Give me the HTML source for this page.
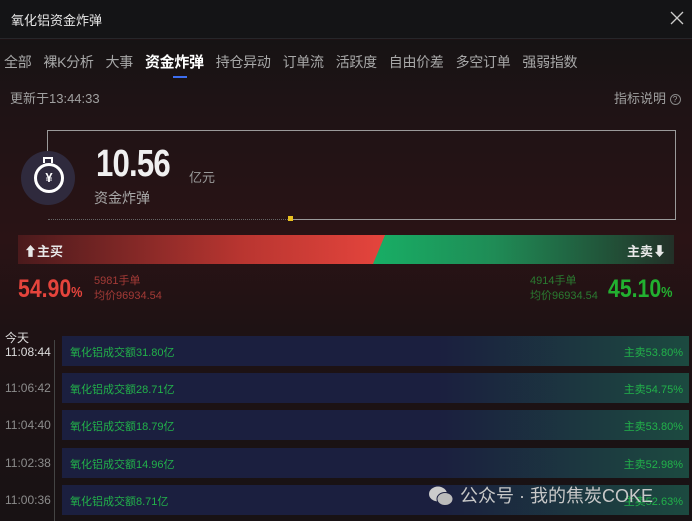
<!DOCTYPE html>
<html><head><meta charset="utf-8"><style>
*{margin:0;padding:0;box-sizing:border-box}
body{width:692px;height:521px;overflow:hidden;background:#1c1214;font-family:"Liberation Sans","Noto Sans CJK SC",sans-serif;position:relative;color:#ccc}
.hdr{position:absolute;left:0;top:0;width:692px;height:39px;background:#141416;border-bottom:1px solid #26262a}
.hdr .t{position:absolute;left:11px;top:10px;font-size:13px;color:#e8e8e8}
.main{position:absolute;left:0;top:40px;width:692px;height:481px;background:linear-gradient(180deg,#161314 0,#1e1315 60px,#2a1315 200px,#1e1214 290px,#181214 481px)}
.tabs{position:absolute;top:51px;left:4px;font-size:14px;color:#a8a8a8;white-space:nowrap;letter-spacing:-0.3px}
.tabs span{margin-right:12px}
.tabs .on{color:#fff;font-weight:bold;font-size:15px;position:relative}
.tabs .on:after{content:"";position:absolute;left:28px;bottom:-7px;width:14px;height:2px;background:#3d6ef0}
.abs{position:absolute;white-space:nowrap}
.row{position:absolute;left:62px;width:627px;height:30px;background:linear-gradient(90deg,#1b1f3f 0,#1b1f3f 60%,#1c4a40 100%);font-size:11px;color:#22b24a}
.row .l{position:absolute;left:8px;top:8px}
.row .r{position:absolute;right:6px;top:8px}
.tm{position:absolute;left:5px;font-size:12px;color:#8c8c8c}
</style></head><body>
<div class="hdr"><div class="t">氧化铝资金炸弹</div>
<svg class="abs" style="left:670px;top:11px" width="14" height="14"><path d="M1 1L13 13M13 1L1 13" stroke="#ccc" stroke-width="1.3"/></svg></div>
<div class="main"></div>
<div class="tabs"><span>全部</span><span>裸K分析</span><span>大事</span><span class="on">资金炸弹</span><span>持仓异动</span><span>订单流</span><span>活跃度</span><span>自由价差</span><span>多空订单</span><span>强弱指数</span></div>
<div class="abs" style="left:10px;top:88px;font-size:13px;color:#a0a0a0">更新于13:44:33</div>
<div class="abs" style="left:614px;top:88px;font-size:13px;color:#a0a0a0">指标说明 <span style="display:inline-block;width:11px;height:11px;border:1px solid #888;border-radius:50%;font-size:8px;text-align:center;line-height:9px;vertical-align:1px">?</span></div>
<div class="abs" style="left:48px;top:130px;width:628px;height:90px;border:1px solid #9a9a9a;border-left:none;border-bottom:none"></div>
<div class="abs" style="left:290px;top:219px;width:386px;height:1px;background:#9a9a9a"></div>
<div class="abs" style="left:48px;top:219px;width:242px;height:0;border-top:1px dotted #666"></div>
<div class="abs" style="left:47px;top:130px;width:1px;height:28px;background:#9a9a9a"></div>
<div class="abs" style="left:288px;top:216px;width:5px;height:5px;background:#e8c020"></div>
<div class="abs" style="left:21px;top:151px;width:54px;height:54px;border-radius:50%;background:#2f2a3d"></div>
<div class="abs" style="left:34px;top:163px;width:30px;height:30px;border-radius:50%;border:3px solid #fff;color:#fff;font-size:13px;text-align:center;line-height:24px;font-weight:bold">¥</div>
<div class="abs" style="left:43px;top:157px;width:10px;height:6px;border:2px solid #fff;border-bottom:none"></div>
<div class="abs" style="left:96px;top:143px;font-size:38px;font-weight:bold;color:#f0f0f0;letter-spacing:-1px;transform:scaleX(0.82);transform-origin:left">10.56</div>
<div class="abs" style="left:189px;top:167px;font-size:13px;color:#999">亿元</div>
<div class="abs" style="left:94px;top:188px;font-size:14px;color:#a8a8a8">资金炸弹</div>
<div class="abs" style="left:18px;top:235px;width:370px;height:29px;background:linear-gradient(90deg,#4a1a1c,#b83530 60%,#e6453d);clip-path:polygon(0 0,100% 0,96.5% 100%,0 100%)"></div>
<div class="abs" style="left:373px;top:235px;width:301px;height:29px;background:linear-gradient(90deg,#18ae65,#1f8c56 40%,#22402f 90%,#233028);clip-path:polygon(4% 0,100% 0,100% 100%,0 100%)"></div>
<div class="abs" style="left:24px;top:241px;font-size:13px;font-weight:bold;color:#e8e8e8">⬆主买</div>
<div class="abs" style="left:627px;top:241px;font-size:13px;font-weight:bold;color:#e8e8e8">主卖⬇</div>
<div class="abs" style="left:18px;top:275px;font-size:25px;font-weight:bold;color:#e5443c;transform:scaleX(0.85);transform-origin:left">54.90<span style="font-size:15px">%</span></div>
<div class="abs" style="left:94px;top:274px;font-size:11px;color:#a33a36;line-height:15px">5981手单<br>均价96934.54</div>
<div class="abs" style="left:530px;top:274px;font-size:11px;color:#2a7a30;line-height:15px">4914手单<br>均价96934.54</div>
<div class="abs" style="left:608px;top:275px;font-size:25px;font-weight:bold;color:#22b030;transform:scaleX(0.85);transform-origin:left">45.10<span style="font-size:15px">%</span></div>
<div class="abs" style="left:54px;top:340px;width:1px;height:181px;background:#444"></div>
<div class="tm" style="top:331px;color:#ddd;line-height:14px">今天<br>11:08:44</div>
<div class="tm" style="top:381px">11:06:42</div>
<div class="tm" style="top:418px">11:04:40</div>
<div class="tm" style="top:456px">11:02:38</div>
<div class="tm" style="top:493px">11:00:36</div>
<div class="row" style="top:336px"><span class="l">氧化铝成交额31.80亿</span><span class="r">主卖53.80%</span></div>
<div class="row" style="top:373px"><span class="l">氧化铝成交额28.71亿</span><span class="r">主卖54.75%</span></div>
<div class="row" style="top:410px"><span class="l">氧化铝成交额18.79亿</span><span class="r">主卖53.80%</span></div>
<div class="row" style="top:448px"><span class="l">氧化铝成交额14.96亿</span><span class="r">主卖52.98%</span></div>
<div class="row" style="top:485px"><span class="l">氧化铝成交额8.71亿</span><span class="r">主卖52.63%</span></div>
<svg class="abs" style="left:428px;top:485px" width="26" height="22"><ellipse cx="10" cy="9" rx="9" ry="7.5" fill="#ccc"/><ellipse cx="17" cy="14" rx="8" ry="6.5" fill="#bbb" stroke="#1b1f3f" stroke-width="1"/></svg>
<div class="abs" style="left:460px;top:482px;font-size:18px;color:#c8c8c8">公众号 · 我的焦炭COKE</div>
</body></html>
